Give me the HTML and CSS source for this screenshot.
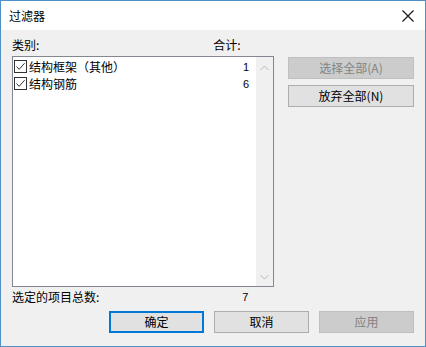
FILE: index.html
```html
<!DOCTYPE html>
<html>
<head>
<meta charset="utf-8">
<link rel="stylesheet" href="styles.css">
</head>
<body>
<div class="window">
  <div class="titlebar">
    <span class="title">过滤器</span>
    <svg class="close" width="12" height="12" viewBox="0 0 12 12"><path d="M0.5 0.5 L11.5 11.5 M11.5 0.5 L0.5 11.5" stroke="#111" stroke-width="1.1" fill="none"/></svg>
  </div>
  <div class="content">
    <div class="main">
      <div class="left">
        <div class="labels"><span>类别:</span><span class="sum">合计:</span></div>
        <div class="list">
          <div class="items">
            <div class="row">
              <span class="cb"><svg width="11" height="11" viewBox="0 0 11 11"><path d="M1.5 5.5 L4.2 8.3 L9.6 2.2" stroke="#333" stroke-width="1" fill="none"/></svg></span>
              <span class="name">结构框架（其他）</span><span class="num">1</span>
            </div>
            <div class="row">
              <span class="cb"><svg width="11" height="11" viewBox="0 0 11 11"><path d="M1.5 5.5 L4.2 8.3 L9.6 2.2" stroke="#333" stroke-width="1" fill="none"/></svg></span>
              <span class="name">结构钢筋</span><span class="num">6</span>
            </div>
          </div>
          <div class="scroll">
            <svg width="9" height="6" viewBox="0 0 9 6"><path d="M0.5 5 L4.5 1 L8.5 5" stroke="#b8b8b8" stroke-width="1" fill="none"/></svg>
            <svg width="9" height="6" viewBox="0 0 9 6"><path d="M0.5 1 L4.5 5 L8.5 1" stroke="#b8b8b8" stroke-width="1" fill="none"/></svg>
          </div>
        </div>
        <div class="total"><span>选定的项目总数:</span><span class="tnum">7</span></div>
      </div>
      <div class="right">
        <button class="btn disabled">选择全部(A)</button>
        <button class="btn">放弃全部(N)</button>
      </div>
    </div>
    <div class="bottom">
      <button class="btn wide focus">确定</button>
      <button class="btn wide">取消</button>
      <button class="btn wide disabled">应用</button>
    </div>
  </div>
</div>
</body>
</html>
```
FILE: styles.css
```css
html, body { margin: 0; padding: 0; }
body {
  width: 426px; height: 347px; overflow: hidden;
  font-family: "Noto Sans CJK SC", "Liberation Sans", sans-serif;
  font-size: 12px; color: #000;
}
.window {
  box-sizing: border-box; width: 426px; height: 347px;
  border: 1px solid #4f8fc3; background: #f0f0f0;
  display: flex; flex-direction: column;
}
.titlebar {
  height: 29px; background: #fff; display: flex; align-items: center;
  justify-content: space-between; padding: 0 10px 0 8px; flex-shrink: 0;
}
.title { font-size: 12px; line-height: 14px; }
.close { margin-right: 1px; }
.content { padding: 8px 11px 0 11px; display: flex; flex-direction: column; }
.main { display: flex; gap: 14px; }
.left { width: 262px; display: flex; flex-direction: column; }
.labels { height: 18px; line-height: 14px; position: relative; display: flex; }
.labels .sum { margin-left: 174px; }
.list {
  box-sizing: border-box; height: 231px; border: 1px solid #828790;
  background: #fff; display: flex;
}
.items { flex: 1; padding-top: 1px; }
.row { height: 17px; display: flex; align-items: center; padding-left: 1px; }
.cb {
  box-sizing: border-box; width: 13px; height: 13px; border: 1px solid #333;
  background: #fff; display: flex; align-items: center; justify-content: center;
  margin-right: 2px;
}
.cb svg { display: block; }
.name { flex: 1; line-height: 14px; }
.num { padding-right: 7px; font-family: "Liberation Sans", sans-serif; font-size: 11px; }
.scroll {
  width: 17px; background: #f0f0f0; display: flex; flex-direction: column;
  align-items: center; justify-content: space-between; padding: 8px 0 6px;
  box-sizing: border-box;
}
.scroll svg { display: block; }
.total { height: 20px; display: flex; align-items: center; line-height: 14px; }
.tnum { margin-left: 143px; font-family: "Liberation Sans", sans-serif; font-size: 11px; }
.right { width: 126px; display: flex; flex-direction: column; gap: 6px; padding-top: 19px; }
.btn {
  box-sizing: border-box; height: 22px; border: 1px solid #adadad;
  background: #e1e1e1; font-family: "Noto Sans CJK SC", sans-serif;
  font-size: 12px; color: #000; padding: 0; line-height: 14px;
  width: 126px;
}
.btn.disabled { background: #cccccc; border-color: #bfbfbf; color: #838383; }
.btn.focus { border: 2px solid #0078d7; }
.bottom { display: flex; justify-content: flex-end; gap: 10px; margin-top: 4px; }
.btn.wide { width: 95px; }
```
